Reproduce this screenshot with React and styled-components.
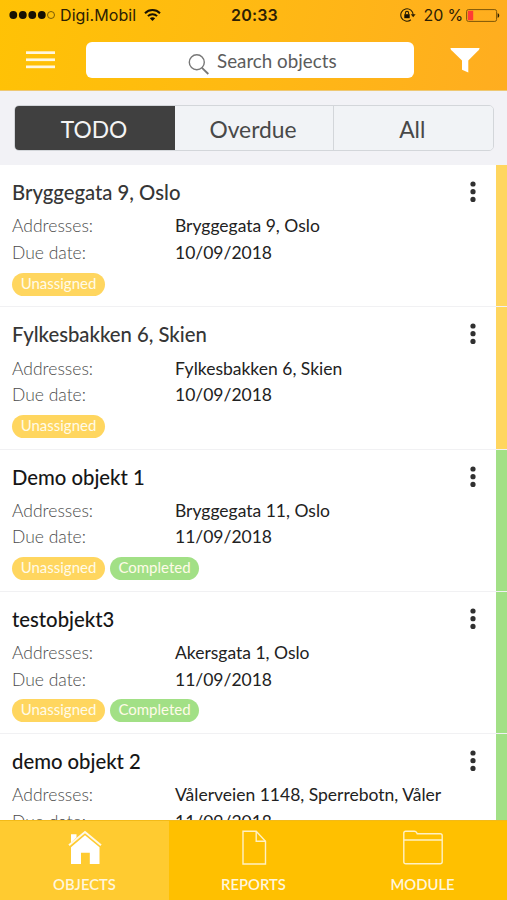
import React, {useState} from 'react';
import styled, {createGlobalStyle} from "styled-components";

const GlobalStyle = createGlobalStyle`
    * {
        box-sizing: border-box;
    }

    body {
        margin: 0;
        font-family: Lato, sans-serif;
        background-color: white;
    }

    button {
        font-family: inherit;
        border: none;
        background: none;
        padding: 0;
        margin: 0;
    }
`

const Screen = styled.div`
    display: flex;
    flex-direction: column;
    width: 507px;
    height: 900px;
    overflow: hidden;
`

const Top = styled.header`
    flex: none;
    height: 91px;
    background: linear-gradient(100deg, #ffc205 0%, #ffb913 50%, #ffad20 100%);
    border-bottom: 1px solid #eec873;
`

const StatusBar = styled.div`
    display: grid;
    grid-template-columns: 1fr auto 1fr;
    align-items: center;
    height: 30px;
    padding: 0 7px 0 9px;
    font-family: Inter, sans-serif;
    font-size: 16px;
    color: #2c2004;
`

const StatusSide = styled.div`
    display: flex;
    align-items: center;
    justify-content: ${props => props.$end ? "flex-end" : "flex-start"};
`

const Carrier = styled.span`
    margin: 0 8px 0 4px;
    letter-spacing: 0.1px;
`

const Clock = styled.span`
    font-weight: 600;
    letter-spacing: 0.2px;
`

const Percent = styled.span`
    margin: 0 3px 0 8px;
    letter-spacing: -0.15px;
`

const NavBar = styled.div`
    display: flex;
    align-items: center;
    height: 60px;
    padding: 0 27px 0 26px;
`

const IconButton = styled.button`
    display: flex;
    flex: none;
`

const Search = styled.div`
    display: flex;
    align-items: center;
    width: 328px;
    height: 36px;
    margin: 0 36px 0 31px;
    padding-left: 102px;
    border-radius: 6px;
    background-color: white;
    color: #5c5c5c;
    font-size: 18.8px;
    white-space: nowrap;

    svg {
        margin: 8px 8px 0 0;
    }
`

const FilterBar = styled.div`
    flex: none;
    height: 74px;
    padding: 13.5px 13.5px 0 14px;
    background-color: #f2f2f6;
`

const Segments = styled.div`
    display: grid;
    grid-template-columns: 160px 158px 1fr;
    height: 46px;
    border: 1px solid #d3d6da;
    border-radius: 5px;
    overflow: hidden;
`

const Segment = styled.button`
    padding: 2px 2px 0 0;
    font-size: 22.8px;
    color: ${props => props.$active ? "#f4f4f4" : "#484848"};
    background-color: ${props => props.$active ? "#404040" : "#f1f3f6"};

    & + & + & {
        border-left: 1px solid #d3d6da;
    }
`

const List = styled.main`
    flex: 1;
    min-height: 0;
    overflow: hidden;
`

const Card = styled.article`
    display: grid;
    grid-template-columns: 1fr 11px;
    height: 142.25px;
    border-bottom: 1px solid #f1f1f3;
`

const CardBody = styled.div`
    padding: 15px 20px 0 12px;
`

const Strip = styled.div`
    background-color: ${props => props.$color};
`

const CardHead = styled.div`
    display: flex;
    justify-content: space-between;
    height: 33.3px;

    svg {
        margin-top: 1px;
    }
`

const Title = styled.h2`
    margin: 0;
    font-size: 20.3px;
    font-weight: 500;
    line-height: 25px;
    color: ${props => props.$dark ? "#161616" : "#363636"};
`

const Field = styled.div`
    display: grid;
    grid-template-columns: 163px 1fr;
    height: 26.7px;
    line-height: 26.7px;
    font-size: 17.5px;
    white-space: nowrap;
`

const Label = styled.span`
    font-weight: 300;
    color: #4c4c4c;
`

const Value = styled.span`
    color: #222;
`

const Badges = styled.div`
    display: flex;
    gap: 5px;
    margin-top: 6px;
`

const Badge = styled.span`
    width: ${props => props.$width};
    height: 23px;
    border-radius: 12px;
    background-color: ${props => props.$color};
    color: #fffbe8;
    font-size: 15px;
    line-height: 21px;
    text-align: center;
`

const TabBar = styled.nav`
    display: grid;
    grid-template-columns: repeat(3, 1fr);
    flex: none;
    height: 80px;
    background-color: #ffc000;
`

const Tab = styled.button`
    display: flex;
    flex-direction: column;
    align-items: center;
    padding-top: 10px;
    background-color: ${props => props.$active ? "#ffcb30" : "transparent"};
    box-shadow: inset 0 1px #f3ba18;
    color: #fff6dc;
    font-size: 14.8px;
    font-weight: 600;

    svg {
        margin-bottom: 10px;
    }
`

const YELLOW = "#ffd65f";
const GREEN = "#a2e086";

const unassigned = {text: "Unassigned", width: "93px", color: YELLOW};
const completed = {text: "Completed", width: "89px", color: GREEN};

const objects = [
    {title: "Bryggegata 9, Oslo", address: "Bryggegata 9, Oslo", due: "10/09/2018", color: YELLOW, badges: [unassigned]},
    {title: "Fylkesbakken 6, Skien", address: "Fylkesbakken 6, Skien", due: "10/09/2018", color: YELLOW, badges: [unassigned]},
    {title: "Demo objekt 1", address: "Bryggegata 11, Oslo", due: "11/09/2018", color: GREEN, badges: [unassigned, completed]},
    {title: "testobjekt3", address: "Akersgata 1, Oslo", due: "11/09/2018", color: GREEN, badges: [unassigned, completed]},
    {title: "demo objekt 2", address: "Vålerveien 1148, Sperrebotn, Våler", due: "11/09/2018", color: GREEN, badges: []},
];

const SignalDots = () => (
    <svg width="47" height="10" viewBox="0 0 47 10">
        {[4.3, 13.8, 23.3, 32.8].map(x => <circle key={x} cx={x} cy="5" r="3.9" fill="#171103"/>)}
        <circle cx="42" cy="5" r="3.5" fill="none" stroke="#6b5004" strokeWidth="0.9"/>
    </svg>
);

const WifiIcon = () => (
    <svg width="17" height="12" viewBox="0 0 17 12" fill="none" stroke="#171103" strokeWidth="2">
        <path d="M1 4.2C5.2 0 11.8 0 16 4.2"/>
        <path d="M3.9 7.1C6.5 4.5 10.5 4.5 13.1 7.1"/>
        <path d="M8.5 12L5.8 9.2C7.3 7.9 9.7 7.9 11.2 9.2Z" fill="#171103" stroke="none"/>
    </svg>
);

const LockIcon = () => (
    <svg width="16" height="14" viewBox="0 0 16 14" fill="none" stroke="#2c2004">
        <path d="M13.2 7A6.2 6.2 0 1 0 10.9 11.8" strokeWidth="1.1"/>
        <path d="M10.8 6.3H15.6L13.2 9.3Z" fill="#2c2004" stroke="none"/>
        <rect x="4.3" y="6.2" width="5.4" height="4" fill="#171103" stroke="none"/>
        <path d="M5.4 6.5V5A1.6 1.6 0 0 1 8.6 5V6.5" strokeWidth="1.1"/>
    </svg>
);

const BatteryIcon = () => (
    <svg width="34" height="13" viewBox="0 0 34 13">
        <rect x="0.6" y="0.6" width="30" height="11.8" rx="1.8" fill="none" stroke="#7d5608"/>
        <rect x="1.8" y="1.8" width="5.4" height="9.4" fill="#ff3b35"/>
        <path d="M31.6 4.3C33.8 4.5 33.8 8.5 31.6 8.7Z" fill="#2c2004"/>
    </svg>
);

const MenuIcon = () => (
    <svg width="29" height="18" viewBox="0 0 29 18" fill="#fff7df">
        <rect y="0.3" width="29" height="2.7"/>
        <rect y="7.4" width="29" height="2.7"/>
        <rect y="14.5" width="29" height="2.7"/>
    </svg>
);

const SearchIcon = () => (
    <svg width="21" height="21" viewBox="0 0 21 21" fill="none" stroke="#777" strokeWidth="1.4">
        <circle cx="8.8" cy="8.3" r="7.5"/>
        <path d="M14 13.8L20.3 20" strokeWidth="1.8"/>
    </svg>
);

const FunnelIcon = () => (
    <svg width="30" height="25" viewBox="0 0 30 25" fill="white">
        <path d="M0.5 0H29.5C29.5 1.2 29 1.9 28 2.8L18.3 12.5V24.5L12 21.8V12.5L2 2.8C1 1.9 0.5 1.2 0.5 0Z"/>
    </svg>
);

const MoreIcon = () => (
    <svg width="6" height="22" viewBox="0 0 6 22" fill="#303030">
        <circle cx="3" cy="3" r="2.6"/>
        <circle cx="3" cy="10.7" r="2.6"/>
        <circle cx="3" cy="18.4" r="2.6"/>
    </svg>
);

const HomeIcon = () => (
    <svg width="34" height="35" viewBox="0 0 34 35">
        <path d="M3 12V4.2H8.5V7.5L3 12.6Z" fill="white"/>
        <path d="M1 15.3L17 2L33 15.3" fill="none" stroke="#fff9e6" strokeWidth="2"/>
        <path d="M17 5.2L31.5 17.2V34H21.8V22.8H13V34H3V17.2Z" fill="white"/>
    </svg>
);

const ReportIcon = () => (
    <svg width="26" height="35" viewBox="0 0 26 35" fill="none" stroke="#fff1c4" strokeWidth="1.4">
        <path d="M2 1.2H15.2L24.5 11.2V34H2Z"/>
        <path d="M15.2 1.2V11.2H24.5"/>
    </svg>
);

const FolderIcon = () => (
    <svg width="40" height="35" viewBox="0 0 40 35" fill="none" stroke="#fff1c4" strokeWidth="1.4">
        <path d="M0.8 10V3Q0.8 1.2 2.6 1.2H11.4Q13 1.2 13.6 2.5L14.2 3.8H37.2Q39.2 3.8 39.2 5.8V31.8Q39.2 33.8 37.2 33.8H2.8Q0.8 33.8 0.8 31.8V10H39.2"/>
    </svg>
);

const ObjectCard = props => {
    const {title, address, due, color, badges} = props.object;

    return (
        <Card>
            <CardBody>
                <CardHead>
                    <Title $dark={color === GREEN}>{title}</Title>
                    <IconButton type="button" aria-label="More"><MoreIcon/></IconButton>
                </CardHead>
                <Field><Label>Addresses:</Label><Value>{address}</Value></Field>
                <Field><Label>Due date:</Label><Value>{due}</Value></Field>
                <Badges>
                    {badges.map(badge => (
                        <Badge key={badge.text} $width={badge.width} $color={badge.color}>{badge.text}</Badge>
                    ))}
                </Badges>
            </CardBody>
            <Strip $color={color}/>
        </Card>);
}

const App = () => {
    const [filter, setFilter] = useState("TODO");

    return (
        <Screen>
            <GlobalStyle/>
            <Top>
                <StatusBar>
                    <StatusSide><SignalDots/><Carrier>Digi.Mobil</Carrier><WifiIcon/></StatusSide>
                    <Clock>20:33</Clock>
                    <StatusSide $end><LockIcon/><Percent>20 %</Percent><BatteryIcon/></StatusSide>
                </StatusBar>
                <NavBar>
                    <IconButton type="button" aria-label="Menu"><MenuIcon/></IconButton>
                    <Search><SearchIcon/>Search objects</Search>
                    <IconButton type="button" aria-label="Filter"><FunnelIcon/></IconButton>
                </NavBar>
            </Top>
            <FilterBar>
                <Segments>
                    {["TODO", "Overdue", "All"].map(name => (
                        <Segment key={name} type="button" $active={filter === name}
                                 onClick={() => setFilter(name)}>{name}</Segment>
                    ))}
                </Segments>
            </FilterBar>
            <List>
                {objects.map(object => <ObjectCard key={object.title} object={object}/>)}
            </List>
            <TabBar>
                <Tab type="button" $active><HomeIcon/>OBJECTS</Tab>
                <Tab type="button"><ReportIcon/>REPORTS</Tab>
                <Tab type="button"><FolderIcon/>MODULE</Tab>
            </TabBar>
        </Screen>);
}

export default App;
